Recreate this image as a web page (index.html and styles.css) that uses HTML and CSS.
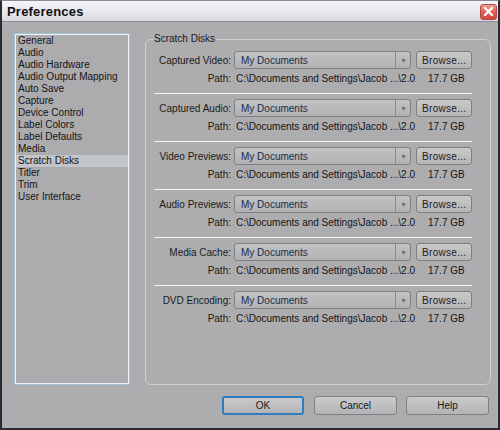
FILE: index.html
```html
<!DOCTYPE html>
<html>
<head>
<meta charset="utf-8">
<link rel="stylesheet" href="styles.css">
</head>
<body>
<div class="window">
  <div class="titlebar">
    <span class="title">Preferences</span>
    <span class="close"><svg width="11" height="11" viewBox="0 0 11 11"><path d="M2 2 L9 9 M9 2 L2 9" stroke="#fff" stroke-width="2.4" stroke-linecap="round"/></svg></span>
  </div>
  <div class="content">
    <div class="main">
      <ul class="list">
        <li>General</li>
        <li>Audio</li>
        <li>Audio Hardware</li>
        <li>Audio Output Mapping</li>
        <li>Auto Save</li>
        <li>Capture</li>
        <li>Device Control</li>
        <li>Label Colors</li>
        <li>Label Defaults</li>
        <li>Media</li>
        <li class="selected">Scratch Disks</li>
        <li>Titler</li>
        <li>Trim</li>
        <li>User Interface</li>
      </ul>
      <fieldset class="group">
        <legend>Scratch Disks</legend>
        <div class="section">
          <div class="row"><span class="label">Captured Video:</span><div class="select"><span class="value">My Documents</span><span class="arrow">▼</span></div><button class="btn browse">Browse...</button></div>
          <div class="path"><span class="label">Path:</span><span class="pathval">C:\Documents and Settings\Jacob ...\2.0</span><span class="size">17.7 GB</span></div>
        </div>
        <div class="section">
          <div class="row"><span class="label">Captured Audio:</span><div class="select"><span class="value">My Documents</span><span class="arrow">▼</span></div><button class="btn browse">Browse...</button></div>
          <div class="path"><span class="label">Path:</span><span class="pathval">C:\Documents and Settings\Jacob ...\2.0</span><span class="size">17.7 GB</span></div>
        </div>
        <div class="section">
          <div class="row"><span class="label">Video Previews:</span><div class="select"><span class="value">My Documents</span><span class="arrow">▼</span></div><button class="btn browse">Browse...</button></div>
          <div class="path"><span class="label">Path:</span><span class="pathval">C:\Documents and Settings\Jacob ...\2.0</span><span class="size">17.7 GB</span></div>
        </div>
        <div class="section">
          <div class="row"><span class="label">Audio Previews:</span><div class="select"><span class="value">My Documents</span><span class="arrow">▼</span></div><button class="btn browse">Browse...</button></div>
          <div class="path"><span class="label">Path:</span><span class="pathval">C:\Documents and Settings\Jacob ...\2.0</span><span class="size">17.7 GB</span></div>
        </div>
        <div class="section">
          <div class="row"><span class="label">Media Cache:</span><div class="select"><span class="value">My Documents</span><span class="arrow">▼</span></div><button class="btn browse">Browse...</button></div>
          <div class="path"><span class="label">Path:</span><span class="pathval">C:\Documents and Settings\Jacob ...\2.0</span><span class="size">17.7 GB</span></div>
        </div>
        <div class="section last">
          <div class="row"><span class="label">DVD Encoding:</span><div class="select"><span class="value">My Documents</span><span class="arrow">▼</span></div><button class="btn browse">Browse...</button></div>
          <div class="path"><span class="label">Path:</span><span class="pathval">C:\Documents and Settings\Jacob ...\2.0</span><span class="size">17.7 GB</span></div>
        </div>
      </fieldset>
    </div>
    <div class="footer">
      <button class="btn big default">OK</button>
      <button class="btn big">Cancel</button>
      <button class="btn big">Help</button>
    </div>
  </div>
</div>
</body>
</html>
```
FILE: styles.css
```css
html, body {
  margin: 0;
  padding: 0;
  background: #ffffff;
}
.window {
  width: 500px;
  height: 430px;
  box-sizing: border-box;
  border: 2px solid #2a2a30;
  border-top: 1px solid #8a8a90;
  background: #adadaf;
  font-family: "Liberation Sans", Arial, sans-serif;
  font-size: 10px;
  color: #141414;
  display: flex;
  flex-direction: column;
}
.titlebar {
  height: 20px;
  flex: none;
  background: linear-gradient(#f6f6f8, #e4e6ec 60%, #d6d9e0);
  border-bottom: 1px solid #8c8c92;
  display: flex;
  align-items: center;
  justify-content: space-between;
  padding: 0 1px 0 5px;
}
.title {
  font-weight: bold;
  font-size: 13px;
  color: #101010;
  letter-spacing: 0.2px;
}
.close {
  width: 17px;
  height: 16px;
  margin-top: 1px;
  border-radius: 3px;
  border: 1px solid #b04848;
  background: linear-gradient(#f0a090, #e06050 50%, #d04838);
  display: flex;
  align-items: center;
  justify-content: center;
  box-sizing: border-box;
}
.content {
  flex: 1;
  display: flex;
  flex-direction: column;
  padding: 11px 0 0 12px;
}
.main {
  display: flex;
  gap: 15px;
  height: 352px;
}
.list {
  list-style: none;
  margin: 0;
  padding: 1px 0 0 0;
  width: 116px;
  box-sizing: border-box;
  border: 1px solid #9cc4d8;
  box-shadow: inset 0 0 0 1px #eef4f8;
  background: #acacae;
}
.list li {
  height: 12px;
  line-height: 12px;
  padding-left: 2px;
  margin: 0 1px;
  white-space: nowrap;
}
.list li.selected {
  background: #c2c6cc;
}
.group {
  margin: 0;
  width: 346px;
  box-sizing: border-box;
  border: 1px solid #d0d0d2;
  border-radius: 6px;
  padding: 2px 0 0 8px;
  min-width: 0;
}
.group legend {
  padding: 0 1px;
  margin-left: -1px;
  color: #1a1a1a;
  font-size: 10px;
  line-height: 12px;
}
.section {
  padding-top: 4px;
  height: 47px;
  border-bottom: 1px solid #f2f2f2;
  box-sizing: border-box;
  width: 318px;
  margin-bottom: 1px;
}
.section.last {
  border-bottom: none;
}
.row {
  display: flex;
  align-items: center;
  height: 18px;
}
.label {
  width: 77px;
  text-align: right;
  flex: none;
  white-space: nowrap;
  color: #1a1a1a;
}
.select {
  margin-left: 3px;
  width: 179px;
  height: 18px;
  box-sizing: border-box;
  border: 1px solid #808084;
  border-radius: 3px;
  background: linear-gradient(#c2c2c4, #b2b2b4);
  display: flex;
  align-items: center;
}
.select .value {
  flex: 1;
  padding-left: 6px;
  color: #1c2c40;
}
.select .arrow {
  width: 14px;
  height: 16px;
  border-left: 1px solid #8a8a8e;
  font-size: 7px;
  color: #707074;
  display: flex;
  align-items: center;
  justify-content: center;
}
.btn {
  font-family: "Liberation Sans", Arial, sans-serif;
  font-size: 10px;
  color: #1a1a1a;
  border: 1px solid #808084;
  border-radius: 3px;
  background: linear-gradient(#cacacc, #b4b4b6);
  padding: 0;
  height: 18px;
  box-sizing: border-box;
}
.browse {
  margin-left: 5px;
  width: 56px;
  letter-spacing: 0.3px;
}
.path {
  display: flex;
  align-items: center;
  height: 18px;
  white-space: nowrap;
}
.pathval {
  margin-left: 5px;
  width: 192px;
  flex: none;
}
.size {
  margin-left: 0;
}
.footer {
  display: flex;
  gap: 9px;
  padding-left: 208px;
  margin-top: 11px;
}
.btn.big {
  width: 83px;
  height: 19px;
}
.btn.default {
  width: 82px;
  border: 2px solid #2f7cc0;
  margin-right: 1px;
}
```
